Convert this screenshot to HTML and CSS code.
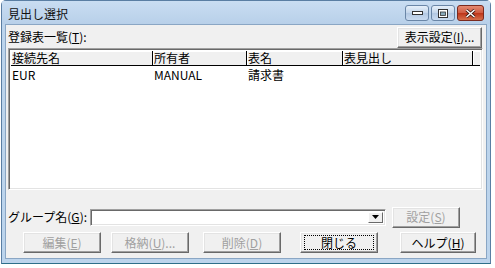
FILE: index.html
```html
<!DOCTYPE html>
<html lang="ja">
<head>
<meta charset="utf-8">
<link rel="stylesheet" href="styles.css">
</head>
<body>
<div class="window">
  <div class="titlebar">
    <span class="title">見出し選択</span>
    <div class="caption-btns">
      <span class="cbtn"><svg width="11" height="5" viewBox="0 0 11 5"><rect x="0.5" y="0.5" width="10" height="3" fill="#fff" stroke="#333"/></svg></span>
      <span class="cbtn"><svg width="10" height="9" viewBox="0 0 10 9"><rect x="0.5" y="0.5" width="9" height="8" fill="#fff" stroke="#333"/><rect x="2.5" y="3" width="5" height="3.5" fill="#8ab" stroke="#333" stroke-width="0.8"/></svg></span>
      <span class="cbtn-close"><svg width="11" height="9" viewBox="0 0 11 9"><path d="M1.5 1 L9.5 8 M9.5 1 L1.5 8" stroke="#3a1a14" stroke-width="3"/><path d="M1.5 1 L9.5 8 M9.5 1 L1.5 8" stroke="#fff" stroke-width="1.5"/></svg></span>
    </div>
  </div>
  <div class="client">
    <div class="toprow">
      <span class="label">登録表一覧(<u>T</u>):</span>
      <button class="btn btn-disp">表示設定(<u>I</u>)...</button>
    </div>
    <div class="listview">
      <div class="header">
        <div class="hcol c1">接続先名</div>
        <div class="hcol c2">所有者</div>
        <div class="hcol c3">表名</div>
        <div class="hcol c4">表見出し</div>
        <div class="hcol c5"></div>
      </div>
      <div class="row">
        <div class="cell c1">EUR</div>
        <div class="cell c2">MANUAL</div>
        <div class="cell c3">請求書</div>
        <div class="cell c4"></div>
      </div>
    </div>
    <div class="grouprow">
      <span class="label">グループ名(<u>G</u>):</span>
      <div class="combo">
        <div class="combo-text"></div>
        <div class="combo-arrow"><svg width="7" height="4" viewBox="0 0 7 4"><path d="M0 0 H7 L3.5 4 Z" fill="#000"/></svg></div>
      </div>
      <button class="btn btn-set disabled">設定(<u>S</u>)</button>
    </div>
    <div class="btnrow">
      <button class="btn disabled b-edit">編集(<u>E</u>)</button>
      <button class="btn disabled b-store">格納(<u>U</u>)...</button>
      <button class="btn disabled b-del">削除(<u>D</u>)</button>
      <button class="btn focus b-close"><span class="focusbox">閉じる</span></button>
      <button class="btn b-help">ヘルプ(<u>H</u>)</button>
    </div>
  </div>
</div>
</body>
</html>
```
FILE: styles.css
```css
html, body {
  margin: 0;
  padding: 0;
  background: #ffffff;
}
body {
  font-family: "Noto Sans CJK JP", "Liberation Sans", sans-serif;
  font-size: 12px;
  color: #000;
}
.window {
  width: 490px;
  height: 264px;
  margin: 0 0 0 1px;
  box-sizing: border-box;
  border: 1px solid #5a7ea3;
  border-bottom-color: #2d6f8a;
  border-radius: 5px 5px 0 0;
  background: #bcd4ec;
  display: flex;
  flex-direction: column;
  padding: 0 3px 4px 3px;
}
.titlebar {
  height: 23px;
  display: flex;
  align-items: center;
  justify-content: space-between;
  background: linear-gradient(#c9ddf2, #b8d0e9);
  margin: 0 -3px;
  padding: 0 6px 0 6px;
}
.title {
  font-size: 12px;
  line-height: 14px;
  margin-top: 2px;
  color: #111;
}
.caption-btns {
  display: flex;
  gap: 2px;
  margin-top: 1px;
}
.cbtn, .cbtn-close {
  width: 24px;
  height: 16px;
  box-sizing: border-box;
  border: 1px solid #6a86a7;
  border-radius: 3px;
  background: linear-gradient(#e6f0fa, #c3d5ea 50%, #b2c8e2 51%, #c9dbf0);
  display: flex;
  align-items: center;
  justify-content: center;
}
.cbtn-close {
  width: 27px;
  border-color: #7a2a1e;
  background-color: #c8472e;
  background-image: linear-gradient(#e58a72, #cf5a40 50%, #bd3418 51%, #d6704c);
}
.client {
  flex: 1;
  background: #f0f0f0;
  border: 1px solid #8aa6c4;
  padding: 1px 3px 4px 2px;
  display: flex;
  flex-direction: column;
}
.toprow {
  display: flex;
  justify-content: space-between;
  align-items: center;
  height: 22px;
}
.label {
  line-height: 14px;
}
u {
  text-decoration: underline;
  text-underline-offset: 1px;
}
.btn {
  font-family: inherit;
  font-size: 12px;
  line-height: 14px;
  color: #000;
  background: #f0f0f0;
  box-sizing: border-box;
  height: 21px;
  padding: 0;
  border: 1px solid;
  border-color: #fff #696969 #696969 #fff;
  box-shadow: inset -1px -1px 0 #a0a0a0, inset 1px 1px 0 #e3e3e3;
  display: flex;
  align-items: center;
  justify-content: center;
}
.btn.disabled {
  color: #a0a0a0;
}
.btn-disp {
  width: 85px;
  margin-right: 1px;
}
.listview {
  height: 142px;
  box-sizing: border-box;
  border: 1px solid;
  border-color: #a0a0a0 #fff #fff #a0a0a0;
  box-shadow: inset 1px 1px 0 #696969, inset -1px -1px 0 #e3e3e3;
  background: #fff;
  padding: 2px;
  margin-top: 0;
}
.header {
  display: flex;
  height: 14px;
  border-bottom: 1px solid #000;
}
.hcol {
  box-sizing: border-box;
  height: 14px;
  line-height: 13px;
  padding-left: 1px;
  background: #f0f0f0;
  border-right: 1px solid #000;
  box-shadow: inset 1px 1px 0 #fff;
}
.c1 { width: 142px; }
.c2 { width: 94px; }
.c3 { width: 96px; }
.c4 { width: 130px; }
.hcol.c5 { flex: 1; border-right: none; }
.row {
  display: flex;
  height: 16px;
  line-height: 16px;
  margin-top: 1px;
}
.cell {
  padding-left: 1px;
  box-sizing: border-box;
}
.grouprow {
  display: flex;
  align-items: center;
  margin-top: 16px;
  height: 22px;
}
.grouprow .label {
  width: 82px;
}
.combo {
  width: 296px;
  height: 17px;
  box-sizing: border-box;
  border: 1px solid;
  border-color: #a0a0a0 #fff #fff #a0a0a0;
  box-shadow: inset 1px 1px 0 #696969, inset -1px -1px 0 #e3e3e3;
  background: #fff;
  display: flex;
  justify-content: flex-end;
  padding: 2px;
}
.combo-arrow {
  width: 15px;
  height: 11px;
  box-sizing: border-box;
  background: #f0f0f0;
  border: 1px solid;
  border-color: #fff #696969 #696969 #fff;
  display: flex;
  align-items: center;
  justify-content: center;
}
.btn-set {
  width: 68px;
  margin-left: 6px;
}
.btnrow {
  display: flex;
  margin-top: 4px;
  padding-left: 15px;
}
.btnrow .btn {
  width: 78px;
}
.b-store { margin-left: 10px; }
.b-del { margin-left: 14px; }
.b-close { margin-left: 19px; }
.b-help { margin-left: 22px; width: 76px !important; }
.focusbox {
  display: flex;
  align-items: center;
  justify-content: center;
  width: 70px;
  height: 15px;
  box-sizing: border-box;
  border: 1px dotted #000;
}
```
